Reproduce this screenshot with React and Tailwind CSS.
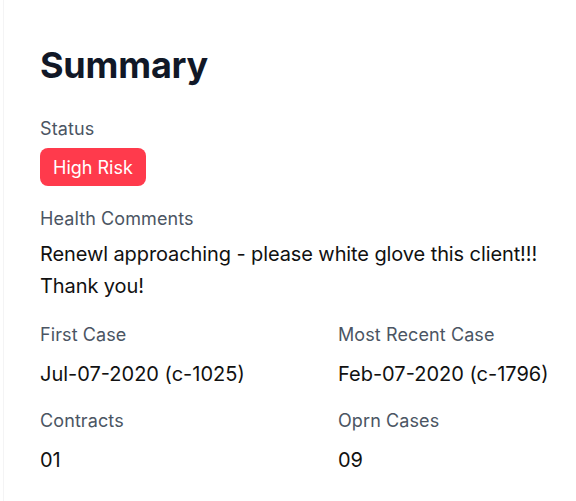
export default function App() {
  const font = { fontFamily: 'Inter, "Noto Sans", sans-serif' };
  const label = "text-[18px] leading-[24px] text-[#4b5563] tracking-[0.1px]";
  return (
    <div className="w-[576px] h-[501px] bg-white pl-[3px]" style={font}>
      <div className="h-full border-l border-[#f4f4f5] pl-[36px] pt-[43px]">
        <h1 className="text-[36px] leading-[44px] font-bold text-[#111827] tracking-[-0.2px]">Summary</h1>
        <div className={"mt-[30px] " + label}>Status</div>
        <div className="mt-[7px] inline-flex h-[38px] items-center rounded-[8px] bg-[#ff3a4c] px-[13px] text-[18px] text-white">
          High Risk
        </div>
        <div className={"mt-[21px] " + label}>Health Comments</div>
        <div className="mt-[7px] text-[20px] leading-[32px] text-[#111111] tracking-[-0.1px]">
          Renewl approaching - please white glove this client!!!
          <br />
          Thank you!
        </div>
        <div className="mt-[21px] grid grid-cols-[298px_1fr]">
          <div>
            <div className={label}>First Case</div>
            <div className="mt-[11px] text-[20px] leading-[32px] text-[#111111]">Jul-07-2020 (c-1025)</div>
          </div>
          <div>
            <div className={label}>Most Recent Case</div>
            <div className="mt-[11px] text-[20px] leading-[32px] text-[#111111]">Feb-07-2020 (c-1796)</div>
          </div>
          <div className="mt-[19px]">
            <div className={label}>Contracts</div>
            <div className="mt-[11px] text-[20px] leading-[32px] text-[#111111]">01</div>
          </div>
          <div className="mt-[19px]">
            <div className={label}>Oprn Cases</div>
            <div className="mt-[11px] text-[20px] leading-[32px] text-[#111111]">09</div>
          </div>
        </div>
      </div>
    </div>
  );
}
